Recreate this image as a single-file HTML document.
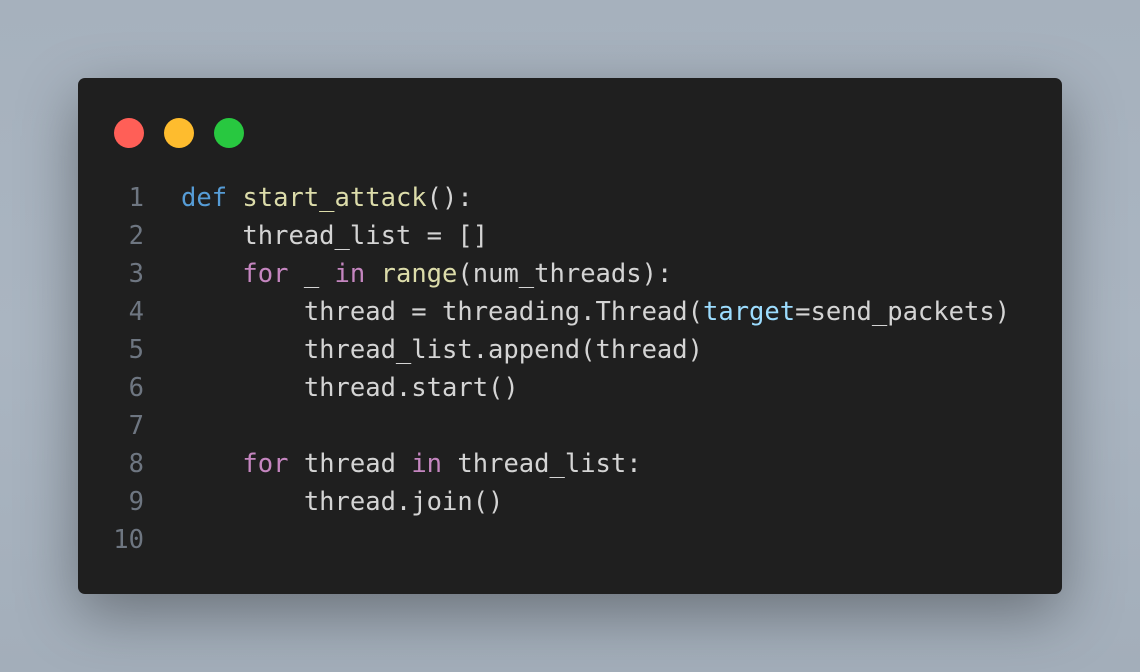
<!DOCTYPE html>
<html><head><meta charset="utf-8"><style>
html,body{margin:0;padding:0;width:1140px;height:672px;overflow:hidden;}
body{background:linear-gradient(180deg,#a6b1bd 0%,#aab5c1 50%,#a3aeba 100%);position:relative;}
.win{position:absolute;left:78px;top:78px;width:984px;height:516px;background:#1f1f1f;border-radius:7px;box-shadow:0 20px 60px rgba(0,0,0,0.35);}
.dot{position:absolute;top:40px;width:30px;height:30px;border-radius:50%;}
.code{position:absolute;left:0;top:101px;font-family:"DejaVu Sans Mono",monospace;font-size:25.5px;line-height:38px;color:#d4d4d4;white-space:pre;}
.ln{display:inline-block;width:66px;text-align:right;color:#6e7681;margin-right:37px;}
.k{color:#569cd6}.f{color:#dcdcaa}.c{color:#c586c0}.p{color:#9cdcfe}
</style></head><body>
<div class="win">
<div class="dot" style="left:36px;background:#ff5f57"></div>
<div class="dot" style="left:86px;background:#febc2e"></div>
<div class="dot" style="left:136px;background:#28c840"></div>
<div class="code"><span class="ln">1</span><span class="k">def</span> <span class="f">start_attack</span>():
<span class="ln">2</span>    thread_list = []
<span class="ln">3</span>    <span class="c">for</span> _ <span class="c">in</span> <span class="f">range</span>(num_threads):
<span class="ln">4</span>        thread = threading.Thread(<span class="p">target</span>=send_packets)
<span class="ln">5</span>        thread_list.append(thread)
<span class="ln">6</span>        thread.start()
<span class="ln">7</span>
<span class="ln">8</span>    <span class="c">for</span> thread <span class="c">in</span> thread_list:
<span class="ln">9</span>        thread.join()
<span class="ln">10</span></div>
</div>
</body></html>
